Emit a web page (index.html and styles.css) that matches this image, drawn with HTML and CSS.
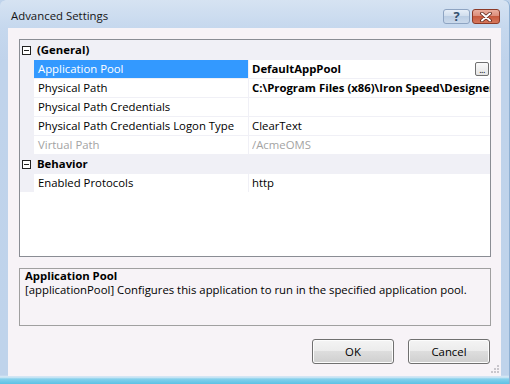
FILE: index.html
```html
<!DOCTYPE html>
<html>
<head>
<meta charset="utf-8">
<link rel="stylesheet" href="styles.css">
</head>
<body>
<div class="window">
  <div class="titlebar">
    <span class="title">Advanced Settings</span>
    <div class="caption-btns">
      <div class="cbtn help">?</div>
      <div class="cbtn close">
        <svg width="14" height="10" viewBox="0 0 14 10"><path d="M3 1.5 L11 8.5 M11 1.5 L3 8.5" stroke="#5a2418" stroke-width="3.6" stroke-linecap="round"/><path d="M3 1.5 L11 8.5 M11 1.5 L3 8.5" stroke="#fff" stroke-width="2" stroke-linecap="round"/></svg>
      </div>
    </div>
  </div>
  <div class="client">
    <div class="grid">
      <div class="row cat">
        <svg class="toggle" width="9" height="9" viewBox="0 0 9 9"><rect x="0.5" y="0.5" width="8" height="8" fill="#fff" stroke="#222"/><path d="M2 4.5 H7" stroke="#222"/></svg>
        <span class="cat-label">(General)</span>
      </div>
      <div class="row prop selected">
        <span class="gutter"></span><span class="name">Application Pool</span>
        <span class="value bold"><span class="vtext">DefaultAppPool</span><span class="dots">...</span></span>
      </div>
      <div class="row prop">
        <span class="gutter"></span><span class="name">Physical Path</span>
        <span class="value bold"><span class="vtext">C:\Program Files (x86)\Iron Speed\Designer\Projects</span></span>
      </div>
      <div class="row prop">
        <span class="gutter"></span><span class="name">Physical Path Credentials</span>
        <span class="value"><span class="vtext"></span></span>
      </div>
      <div class="row prop">
        <span class="gutter"></span><span class="name">Physical Path Credentials Logon Type</span>
        <span class="value"><span class="vtext">ClearText</span></span>
      </div>
      <div class="row prop disabled">
        <span class="gutter"></span><span class="name">Virtual Path</span>
        <span class="value"><span class="vtext">/AcmeOMS</span></span>
      </div>
      <div class="row cat">
        <svg class="toggle" width="9" height="9" viewBox="0 0 9 9"><rect x="0.5" y="0.5" width="8" height="8" fill="#fff" stroke="#222"/><path d="M2 4.5 H7" stroke="#222"/></svg>
        <span class="cat-label">Behavior</span>
      </div>
      <div class="row prop">
        <span class="gutter"></span><span class="name">Enabled Protocols</span>
        <span class="value"><span class="vtext">http</span></span>
      </div>
    </div>
    <div class="desc">
      <div class="desc-title">Application Pool</div>
      <div class="desc-text">[applicationPool] Configures this application to run in the specified application pool.</div>
    </div>
    <div class="buttons">
      <button class="btn">OK</button>
      <button class="btn">Cancel</button>
    </div>
    <svg class="grip" width="9" height="9" viewBox="0 0 9 9">
      <rect x="6" y="0" width="2" height="2" fill="#c9c6cc"/>
      <rect x="3" y="3" width="2" height="2" fill="#c9c6cc"/><rect x="6" y="3" width="2" height="2" fill="#c9c6cc"/>
      <rect x="0" y="6" width="2" height="2" fill="#c9c6cc"/><rect x="3" y="6" width="2" height="2" fill="#c9c6cc"/><rect x="6" y="6" width="2" height="2" fill="#c9c6cc"/>
    </svg>
  </div>
</div>
</body>
</html>
```
FILE: styles.css
```css
html, body {
  margin: 0;
  padding: 0;
}
body {
  font-family: "Open Sans", "Noto Sans", sans-serif;
  font-size: 11.35px;
  color: #000;
  background: #bfd3eb;
}
.window {
  width: 510px;
  height: 384px;
  box-sizing: border-box;
  display: flex;
  flex-direction: column;
  padding: 0 9px 8px 8px;
  border-radius: 6px 6px 0 0;
  background: linear-gradient(to bottom, #d6e3f2 0px, #c6d8ee 27px, #c0d3eb 60px, #bfd3eb 375px, #d9ebf7 377px, #86d0ec 379px, #5cc2e5 384px);
  box-shadow: inset -1px 0 0 #8fb0d3;
}
.titlebar {
  height: 28px;
  flex: none;
  display: flex;
  align-items: flex-start;
}
.title {
  margin-top: 7px;
  margin-left: 3px;
  font-size: 11.4px;
  line-height: 18px;
  color: #151515;
}
.caption-btns {
  margin-left: auto;
  margin-top: 9px;
  margin-right: 1px;
  display: flex;
  gap: 2px;
}
.cbtn {
  height: 15px;
  box-sizing: border-box;
  border-radius: 3px;
  display: flex;
  align-items: center;
  justify-content: center;
}
.help {
  width: 27px;
  border: 1px solid #8ea4c2;
  background: linear-gradient(to bottom, #e6eef8 0%, #cfdcec 50%, #bccee4 50%, #cbdaec 100%);
  color: #34506f;
  font-size: 13px;
  font-weight: bold;
  line-height: 13px;
}
.close {
  width: 28px;
  border: 1px solid #8c3a27;
  background: linear-gradient(to bottom, #eaae9e 0%, #da8b77 50%, #c65a3e 50%, #d6775c 100%);
}
.client {
  flex: 1;
  position: relative;
  background: #f7f3f7;
  padding: 11px 10px 12px 11px;
  display: flex;
  flex-direction: column;
}
.grid {
  height: 218px;
  box-sizing: border-box;
  border: 1px solid #8a8d94;
  background: #fff;
  display: flex;
  flex-direction: column;
  overflow: hidden;
}
.row {
  height: 19px;
  box-sizing: border-box;
  border-top: 1px solid #f0f0f6;
  flex: none;
}
.cat {
  background: #f0f0f6;
  display: flex;
  align-items: center;
}
.toggle {
  margin-left: 2px;
  margin-right: 6px;
  flex: none;
}
.cat-label {
  font-weight: bold;
  line-height: 18px;
}
.prop {
  display: grid;
  grid-template-columns: 14px 214px 242px;
}
.gutter {
  background: #f0f0f6;
}
.name {
  padding-left: 4px;
  line-height: 18px;
  white-space: nowrap;
  overflow: hidden;
}
.selected .name {
  background: #3399ff;
  color: #fff;
}
.value {
  border-left: 1px solid #f0f0f6;
  padding-left: 3px;
  display: flex;
  align-items: flex-start;
  min-width: 0;
  overflow: hidden;
}
.vtext {
  flex: 1;
  min-width: 0;
  line-height: 18px;
  white-space: nowrap;
  overflow: hidden;
}
.bold .vtext {
  font-weight: bold;
}
.disabled .name, .disabled .vtext {
  color: #a3a3a3;
}
.dots {
  flex: none;
  width: 14px;
  height: 14px;
  box-sizing: border-box;
  margin-top: 2px;
  margin-right: 1px;
  border: 1px solid #707070;
  border-radius: 2px;
  background: linear-gradient(to bottom, #fafafa, #e4e4e4);
  font-size: 9px;
  font-weight: normal;
  line-height: 14px;
  text-align: center;
  color: #000;
  letter-spacing: -0.5px;
}
.desc {
  margin-top: 11px;
  height: 58px;
  box-sizing: border-box;
  border: 1px solid #a0a0a0;
  padding: 0 5px;
  line-height: 14px;
}
.desc-title {
  font-weight: bold;
}
.desc-text {
  white-space: nowrap;
}
.buttons {
  margin-top: 13px;
  display: flex;
  justify-content: flex-end;
  gap: 14px;
  padding-right: 1px;
}
.btn {
  width: 82px;
  height: 25px;
  box-sizing: border-box;
  border: 1px solid #707070;
  border-radius: 3px;
  background: linear-gradient(to bottom, #f4f4f4 0%, #ebebeb 50%, #dddddd 50%, #cfcfcf 100%);
  box-shadow: inset 0 0 0 1px #fcfcfc;
  font-family: "Open Sans", "Noto Sans", sans-serif;
  font-size: 11.35px;
  color: #000;
  padding: 0;
}
.grip {
  position: absolute;
  right: 1px;
  bottom: 2px;
}
```
